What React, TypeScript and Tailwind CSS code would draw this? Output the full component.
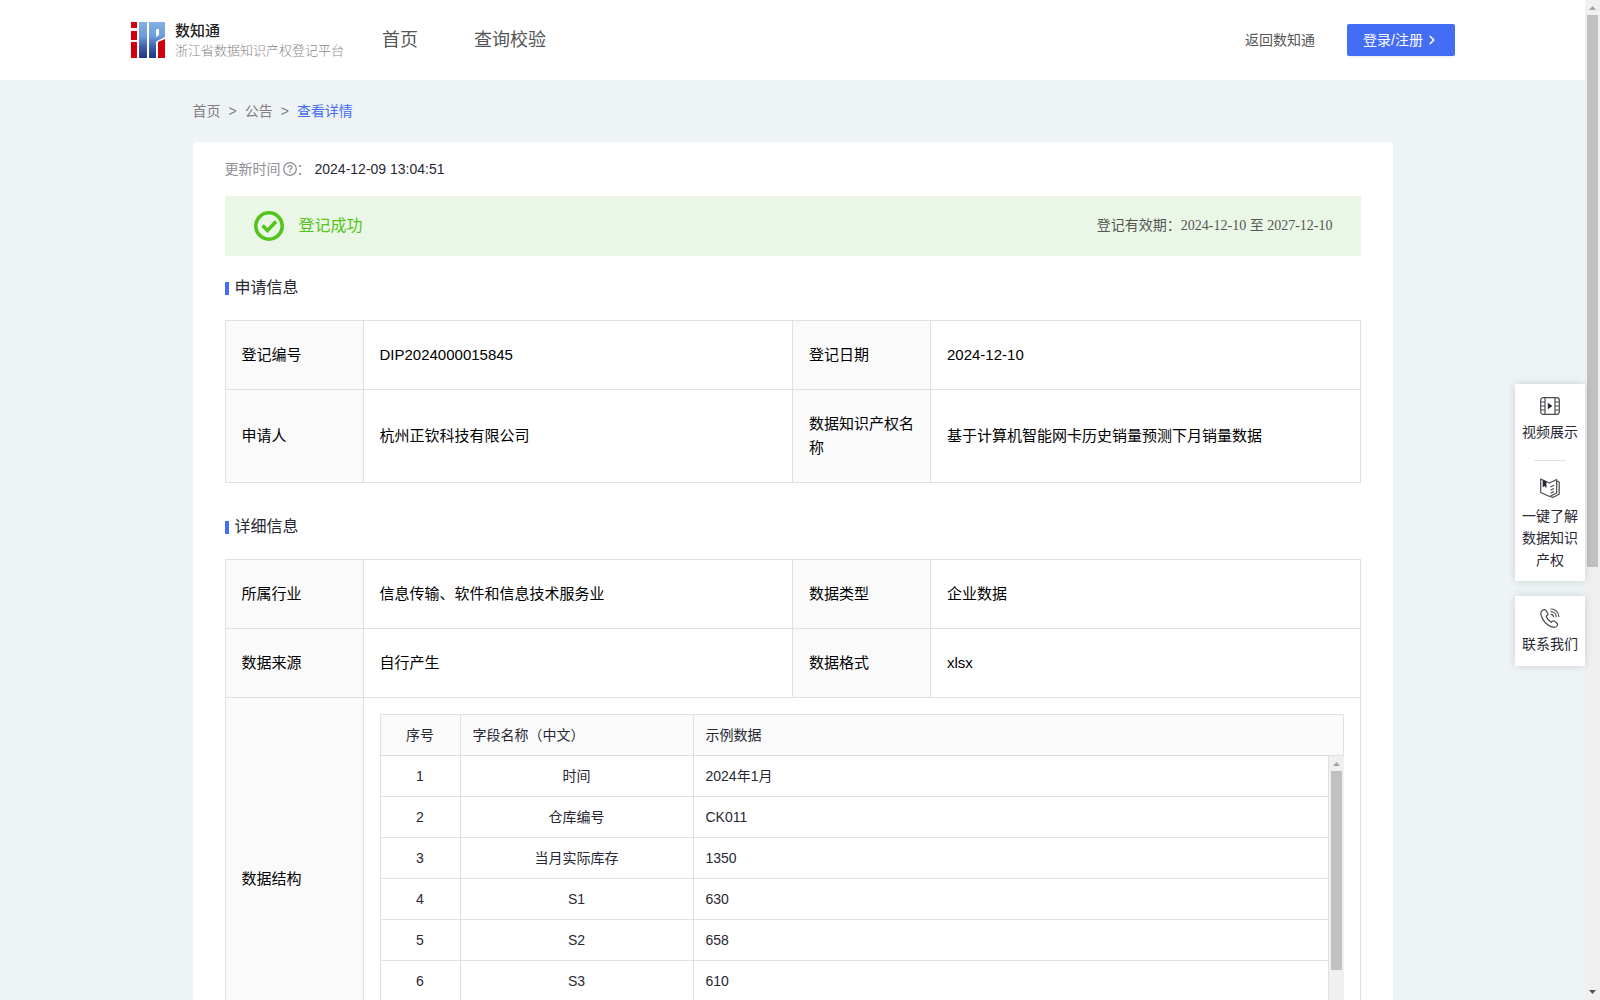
import React from 'react';
import { ChevronRight } from 'lucide-react';

interface InfoItem {
  label: string;
  value: string;
}

interface FieldRow {
  name: string;
  sample: string;
}

const applyInfo: InfoItem[][] = [
  [
    { label: '登记编号', value: 'DIP2024000015845' },
    { label: '登记日期', value: '2024-12-10' },
  ],
  [
    { label: '申请人', value: '杭州正钦科技有限公司' },
    { label: '数据知识产权名称', value: '基于计算机智能网卡历史销量预测下月销量数据' },
  ],
];

const detailInfo: InfoItem[][] = [
  [
    { label: '所属行业', value: '信息传输、软件和信息技术服务业' },
    { label: '数据类型', value: '企业数据' },
  ],
  [
    { label: '数据来源', value: '自行产生' },
    { label: '数据格式', value: 'xlsx' },
  ],
];

const fieldRows: FieldRow[] = [
  { name: '时间', sample: '2024年1月' },
  { name: '仓库编号', sample: 'CK011' },
  { name: '当月实际库存', sample: '1350' },
  { name: 'S1', sample: '630' },
  { name: 'S2', sample: '658' },
  { name: 'S3', sample: '610' },
];

const Logo = () => (
  <svg width="35" height="36" viewBox="-1 0 35 36" aria-hidden="true">
    <defs>
      <linearGradient id="logoBlue" gradientUnits="userSpaceOnUse" x1="0" y1="0" x2="0" y2="36">
        <stop offset="0" stopColor="#7fb2e6" />
        <stop offset="0.4" stopColor="#6d9bd8" />
        <stop offset="0.7" stopColor="#3d5ea8" />
        <stop offset="1" stopColor="#22367e" />
      </linearGradient>
    </defs>
    <path d="M0 0h6v6H0zM0 9h6v9H0zM0 20h6v16H0z" fill="#d2000f" />
    <path d="M8 0h8v36H8z" fill="url(#logoBlue)" />
    <path d="M18 0h16v15l-8 4-1 1v16h-7z" fill="url(#logoBlue)" />
    <path d="M25 7v8l3-2V7z" fill="#fff" />
    <path d="M34 17v19h-7V20z" fill="#d2000f" />
  </svg>
);

const QuestionIcon = () => (
  <svg width="14" height="14" viewBox="0 0 14 14" fill="none" stroke="#8f9095" aria-hidden="true">
    <circle cx="7" cy="7" r="6.300" strokeWidth="1.300" />
    <path d="M5 5.500c0-1.100.9-1.800 2-1.800s2 .7 2 1.700c0 1.400-2 1.300-2 2.800" strokeWidth="1.300" />
    <path d="M7 9.300v1.300" strokeWidth="1.400" />
  </svg>
);

const SuccessIcon = () => (
  <svg width="32" height="32" viewBox="0 0 32 32" fill="none" stroke="#52c41a" aria-hidden="true">
    <circle cx="16" cy="16" r="13.200" strokeWidth="3.600" />
    <path d="M9.500 15.500l5 5 8.500-9" strokeWidth="3.600" />
  </svg>
);

const VideoIcon = () => (
  <svg width="20" height="20" viewBox="0 0 20 20" fill="none" stroke="#4a4a52" strokeWidth="1.200" aria-hidden="true">
    <rect x="0.700" y="1.700" width="18.600" height="16.600" rx="2.500" />
    <path d="M5 1.700v16.600M15 1.700v16.600M.7 6H5M.7 10H5M.7 14H5M15 6h4.300M15 10h4.300M15 14h4.300" />
    <path d="M7.800 6.800v6.400l4.600-3.200z" fill="#272833" stroke="none" />
  </svg>
);

const BookIcon = () => (
  <svg width="20" height="20" viewBox="0 0 20 20" fill="none" stroke="#4a4a52" strokeWidth="1.200" strokeLinejoin="round" aria-hidden="true">
    <path d="M.7 1v13.500l9 4 7-3.500V1.500L9.500 5z" />
    <path d="M16.700 3l2.500 1v12.300l-6 3-3.500-.8" />
    <path d="M10.500 9l3.500-1.700M10.500 12.200l3.500-1.700M10.500 15.200l3.500-1.700" />
    <path d="M2.700 2v7.500l1.800-1.500 1.900 2.300V3.600z" fill="#272833" stroke="none" />
  </svg>
);

const PhoneIcon = () => (
  <svg width="20" height="20" viewBox="0 0 20 20" fill="none" stroke="#4a4a52" strokeWidth="1.200" strokeLinecap="round" strokeLinejoin="round" aria-hidden="true">
    <path d="M2.500 2.200C1 3.200.5 5.200 1.200 7.500c1.700 5.300 5.800 9.700 10.600 11.400 2.300.8 4.500.3 5.500-1.400.6-1 .3-1.900-.5-2.500l-2.300-1.700c-.8-.6-1.600-.5-2.300.1l-.9.900c-2.300-1.200-4.300-3.500-5.200-6l1-.8c.8-.6 1-1.500.5-2.300L6.100 2.700c-.8-1.200-2.300-1.300-3.600-.5z" />
    <path d="M11 1c4.300 0 7.600 3.300 7.800 7.500M11 3.700c2.900 0 5.100 2.200 5.200 5M11 6.300c1.400 0 2.400 1.100 2.500 2.500" />
  </svg>
);

const ScrollBar: React.FC<{ thumbClass: string }> = ({ thumbClass }) => (
  <div className="flex w-[15px] shrink-0 flex-col items-center bg-[#f0f0f0]" aria-hidden="true">
    <svg className="block shrink-0" width="15" height="15" viewBox="0 0 15 15">
      <path d="M4 10h7L7.500 6z" fill="#a3a3a3" />
    </svg>
    <div className={`w-[11px] bg-[#c1c1c1] ${thumbClass}`} />
    <svg className="mt-auto block shrink-0" width="15" height="15" viewBox="0 0 15 15">
      <path d="M4 5h7L7.500 9z" fill="#505050" />
    </svg>
  </div>
);

const SectionTitle: React.FC<{ title: string }> = ({ title }) => (
  <h2 className="flex items-center gap-[6px] text-base leading-6 text-[#272833]">
    <span className="mt-px h-[13px] w-1 bg-[#446df6]" />
    {title}
  </h2>
);

const InfoTable: React.FC<{ rows: InfoItem[][]; children?: React.ReactNode }> = ({ rows, children }) => (
  <table className="w-full table-fixed border-collapse text-[15px] leading-6 text-black">
    <colgroup>
      <col className="w-[138px]" />
      <col />
      <col className="w-[138px]" />
      <col />
    </colgroup>
    <tbody>
      {rows.map((row) => (
        <tr key={row[0].label}>
          {row.map((item) => (
            <React.Fragment key={item.label}>
              <th className="border border-[#e0e0e0] bg-[#fafafa] px-4 py-[22px] text-left font-normal">{item.label}</th>
              <td className="border border-[#e0e0e0] px-4 py-[22px]">{item.value}</td>
            </React.Fragment>
          ))}
        </tr>
      ))}
      {children}
    </tbody>
  </table>
);

const FieldColumns = () => (
  <colgroup>
    <col className="w-20" />
    <col className="w-[233px]" />
    <col />
  </colgroup>
);

const FieldTable = () => (
  <div className="text-sm leading-5 text-[#272833]">
    <table className="w-full table-fixed border-separate border-spacing-0 border-t border-l border-[#e0e0e0]">
      <FieldColumns />
      <thead>
        <tr className="bg-[#fafafa]">
          <th className="border-r border-b border-[#e0e0e0] px-3 py-[10px] text-center font-normal">序号</th>
          <th className="border-r border-b border-[#e0e0e0] px-3 py-[10px] text-left font-normal">字段名称（中文）</th>
          <th className="border-r border-b border-[#e0e0e0] px-3 py-[10px] text-left font-normal">示例数据</th>
        </tr>
      </thead>
    </table>
    <div className="flex h-[288px]">
      <div className="min-w-0 flex-1 overflow-y-auto [scrollbar-width:none]">
        <table className="w-full table-fixed border-separate border-spacing-0 border-l border-[#e0e0e0]">
          <FieldColumns />
          <tbody>
            {fieldRows.map((row, index) => (
              <tr key={row.name}>
                <td className="border-r border-b border-[#e0e0e0] px-3 py-[10px] text-center">{index + 1}</td>
                <td className="border-r border-b border-[#e0e0e0] px-3 py-[10px] text-center">{row.name}</td>
                <td className="border-r border-b border-[#e0e0e0] px-3 py-[10px]">{row.sample}</td>
              </tr>
            ))}
          </tbody>
        </table>
      </div>
      <ScrollBar thumbClass="h-[199px]" />
    </div>
  </div>
);

const Header = () => (
  <header className="flex h-20 items-center bg-white px-[130px]">
    <a href="#" className="flex items-center gap-[10px]">
      <Logo />
      <span className="flex flex-col pt-px">
        <span className="text-[15px] leading-5 font-medium text-[#222222]">数知通</span>
        <span className="text-[13px] leading-5 font-light text-[#888888]">浙江省数据知识产权登记平台</span>
      </span>
    </a>
    <nav className="ml-[38px] flex gap-14 text-lg text-[#555555]">
      <a href="#">首页</a>
      <a href="#">查询校验</a>
    </nav>
    <div className="ml-auto flex items-center gap-8">
      <a href="#" className="text-sm text-[#555555]">返回数知通</a>
      <button className="flex h-8 w-[108px] items-center rounded-xs bg-[#446df6] px-4 text-sm text-white shadow-[0_2px_0_rgba(0,0,0,0.045)]">
        登录/注册
        <ChevronRight className="ml-[2px] h-[14px] w-[14px]" strokeWidth={3} />
      </button>
    </div>
  </header>
);

const SideTools = () => (
  <aside className="absolute top-[384px] right-[15px] flex w-[70px] flex-col gap-[15px] text-center text-sm leading-[22px] text-[#272833]">
    <div className="flex flex-col items-center bg-white pt-3 pb-[10px] shadow-[0_0_8px_rgba(0,0,0,0.15)]">
      <a href="#" className="flex flex-col items-center gap-[5px]">
        <VideoIcon />
        视频展示
      </a>
      <span className="my-[17px] h-px w-8 bg-[#e0e0e0]" />
      <a href="#" className="flex flex-col items-center gap-[7px] px-[7px]">
        <BookIcon />
        一键了解数据知识产权
      </a>
    </div>
    <a href="#" className="flex flex-col items-center gap-[5px] bg-white pt-3 pb-[11px] shadow-[0_0_8px_rgba(0,0,0,0.15)]">
      <PhoneIcon />
      联系我们
    </a>
  </aside>
);

export default function App() {
  return (
    <div className="relative flex h-screen overflow-hidden bg-[#eef3f6] font-['Liberation_Sans','Noto_Sans_CJK_SC',sans-serif]">
      <div className="min-w-0 flex-1 overflow-y-auto [scrollbar-width:none]">
        <Header />

        <main className="mx-auto max-w-[1200px]">
          {/* Breadcrumb */}
          <nav className="flex gap-2 py-5 text-sm leading-[22px] text-[#808084]">
            <a href="#">首页</a>
            <span>&gt;</span>
            <a href="#">公告</a>
            <span>&gt;</span>
            <a href="#" className="text-[#446df6]">查看详情</a>
          </nav>

          <div className="rounded bg-white px-8 pt-4 pb-8">
            <div className="flex items-center text-sm leading-[22px] text-[#909095]">
              <span className="mr-[2px]">更新时间</span>
              <QuestionIcon />
              <span>：</span>
              <span className="ml-1 text-[#272833]">2024-12-09 13:04:51</span>
            </div>

            {/* Status banner */}
            <div className="mt-4 flex h-[60px] items-center bg-[#ebf7e6] px-7">
              <SuccessIcon />
              <span className="ml-[14px] text-base text-[#52c41a]">登记成功</span>
              <span className="ml-auto font-['Liberation_Serif','Noto_Sans_CJK_SC',serif] text-sm text-[#555555]">
                登记有效期：2024-12-10 至 2027-12-10
              </span>
            </div>

            <section className="mt-5">
              <SectionTitle title="申请信息" />
              <div className="mt-5">
                <InfoTable rows={applyInfo} />
              </div>
            </section>

            <section className="mt-8">
              <SectionTitle title="详细信息" />
              <div className="mt-5">
                <InfoTable rows={detailInfo}>
                  <tr>
                    <th className="border border-[#e0e0e0] bg-[#fafafa] px-4 text-left font-normal">数据结构</th>
                    <td colSpan={3} className="border border-[#e0e0e0] p-4">
                      <FieldTable />
                    </td>
                  </tr>
                </InfoTable>
              </div>
            </section>
          </div>
        </main>
      </div>

      <ScrollBar thumbClass="h-[552px]" />
      <SideTools />
    </div>
  );
}
